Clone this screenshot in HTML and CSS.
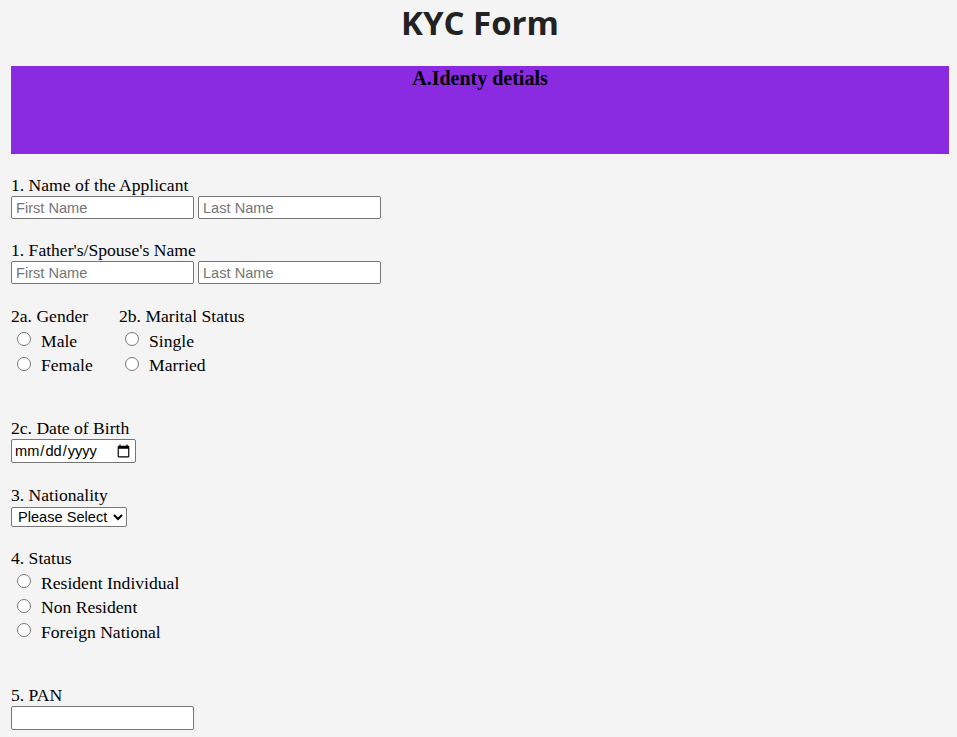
FILE: index.html
```html
<!DOCTYPE html>
<html lang="en">
<head>
<meta charset="utf-8">
<title>KYC Form</title>
<link rel="stylesheet" href="styles.css">
</head>
<body>
<h1 class="title">KYC Form</h1>
<form class="form">
  <section class="banner">
    <h3 class="banner-title">A.Identy detials</h3>
  </section>

  <div class="field f-name">
    <div class="label">1. Name of the Applicant</div>
    <div class="row">
      <input class="text" type="text" placeholder="First Name">
      <input class="text" type="text" placeholder="Last Name">
    </div>
  </div>

  <div class="field f-father">
    <div class="label">1. Father's/Spouse's Name</div>
    <div class="row">
      <input class="text" type="text" placeholder="First Name">
      <input class="text" type="text" placeholder="Last Name">
    </div>
  </div>

  <div class="field f-gender cols">
    <div class="col col-gender">
      <div class="label">2a. Gender</div>
      <div class="radios">
        <label class="radio"><input type="radio" name="g"><span>Male</span></label>
        <label class="radio"><input type="radio" name="g"><span>Female</span></label>
      </div>
    </div>
    <div class="col">
      <div class="label">2b. Marital Status</div>
      <div class="radios">
        <label class="radio"><input type="radio" name="m"><span>Single</span></label>
        <label class="radio"><input type="radio" name="m"><span>Married</span></label>
      </div>
    </div>
  </div>

  <div class="field f-dob">
    <div class="label">2c. Date of Birth</div>
    <input class="date" type="date">
  </div>

  <div class="field f-nat">
    <div class="label">3. Nationality</div>
    <select class="select">
      <option>Please Select</option>
      <option>Indian</option>
      <option>Other</option>
    </select>
  </div>

  <div class="field f-status">
    <div class="label">4. Status</div>
    <div class="radios">
      <label class="radio"><input type="radio" name="s"><span>Resident Individual</span></label>
      <label class="radio"><input type="radio" name="s"><span>Non Resident</span></label>
      <label class="radio"><input type="radio" name="s"><span>Foreign National</span></label>
    </div>
  </div>

  <div class="field f-pan">
    <div class="label">5. PAN</div>
    <input class="text pan" type="text">
  </div>
</form>
</body>
</html>
```

FILE: styles.css
```css
html, body {
  margin: 0;
  padding: 0;
}
body {
  background: #f4f4f4;
  padding: 0 8px 20px 11px;
  font-family: "Liberation Serif", "Times New Roman", serif;
  font-size: 17.6px;
  color: #000;
}
.title {
  margin: 0;
  padding-top: 3px;
  height: 63px;
  text-align: center;
  font-family: "Open Sans", "Noto Sans", sans-serif;
  font-weight: 700;
  font-size: 33px;
  line-height: 40px;
  color: #222;
}
.form {
  display: flex;
  flex-direction: column;
}
.banner {
  background: #8a2be2;
  height: 88px;
}
.banner-title {
  margin: 0;
  padding-top: 1px;
  text-align: center;
  font-size: 20px;
  line-height: 22px;
  font-weight: 700;
}
.label {
  line-height: 21px;
}
.field {
  display: flex;
  flex-direction: column;
  align-items: flex-start;
}
.f-name { margin-top: 21px; }
.f-father { margin-top: 21px; }
.f-gender { margin-top: 22px; }
.f-dob { margin-top: 41px; }
.f-nat { margin-top: 22px; }
.f-status { margin-top: 21px; }
.f-pan { margin-top: 41px; }
.row {
  display: flex;
  gap: 4px;
}
.text {
  box-sizing: border-box;
  width: 183px;
  height: 23px;
  margin: 0;
  padding: 1px 4px;
  border: 1px solid #767676;
  border-radius: 2px;
  background: #fff;
  font-family: "Liberation Sans", Arial, sans-serif;
  font-size: 14.6px;
}
.pan {
  height: 24px;
}
.text::placeholder {
  color: #757575;
}
.cols {
  flex-direction: row;
}
.col {
  display: flex;
  flex-direction: column;
}
.col-gender {
  width: 108px;
}
.radios {
  display: flex;
  flex-direction: column;
  padding-top: 1px;
}
.radio {
  display: flex;
  align-items: center;
  height: 24.5px;
}
.radio input {
  margin: 0 10px 0 6px;
  width: 14px;
  height: 14px;
  position: relative;
  top: -1px;
}
.radio span {
  position: relative;
  top: 1px;
}
.date {
  box-sizing: border-box;
  width: 125px;
  height: 24px;
  margin: 0;
  border: 1px solid #767676;
  border-radius: 2px;
  background: #fff;
  font-family: "Liberation Sans", Arial, sans-serif;
  font-size: 14.6px;
  padding: 1px 2px;
}
.select {
  box-sizing: border-box;
  width: 116px;
  height: 20px;
  margin: 1px 0 0;
  border: 1px solid #767676;
  border-radius: 2px;
  background: #fff;
  font-family: "Liberation Sans", Arial, sans-serif;
  font-size: 14.6px;
  padding: 0 2px;
  color: #000;
}
```
